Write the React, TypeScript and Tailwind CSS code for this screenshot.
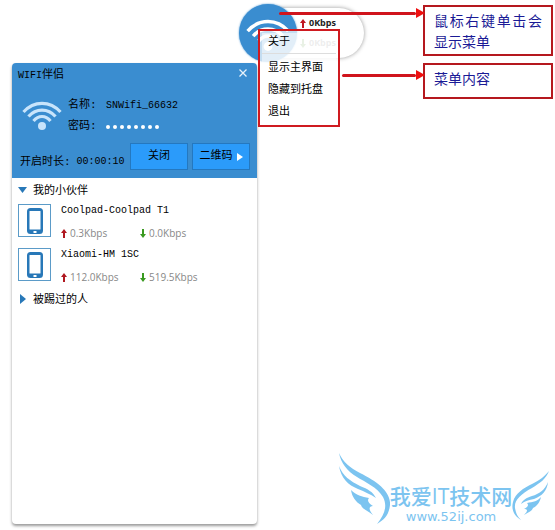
import { useState } from "react";

interface DeviceProps {
  id: number;
  name: string;
  up: string;
  down: string;
}

const devices: DeviceProps[] = [
  { id: 1, name: "Coolpad-Coolpad T1", up: "0.3Kbps", down: "0.0Kbps" },
  { id: 2, name: "Xiaomi-HM 1SC", up: "112.0Kbps", down: "519.5Kbps" },
];

const menuItems = ["显示主界面", "隐藏到托盘", "退出"];

function WifiIcon({ className }: { className: string }) {
  return (
    <svg viewBox="0 0 40 30" className={className} fill="none" aria-hidden="true">
      <g stroke="currentColor" strokeWidth="3.2">
        <path d="M1.5 11C12-.5 28-.5 38.5 11" />
        <path d="M6.5 15.5C14 7 26 7 33.5 15.5" />
        <path d="M11.5 20C16.5 14 23.5 14 28.5 20" />
      </g>
      <circle cx="20" cy="25" r="4" fill="currentColor" />
    </svg>
  );
}

function Arrow({ down, className }: { down?: boolean; className: string }) {
  return (
    <svg viewBox="0 0 6 9" className={`h-[9px] w-1.5 shrink-0 ${className}`} aria-hidden="true">
      <path
        d={down ? "M2 0h2v5h2L3 9 0 5h2z" : "M2 9h2V4h2L3 0 0 4h2z"}
        fill="currentColor"
      />
    </svg>
  );
}

function Pointer({ className }: { className: string }) {
  return (
    <div className={`absolute right-full flex items-center ${className}`}>
      <span className="h-[3px] flex-1 rounded-full bg-[#d0141c]" />
      <svg viewBox="0 0 9 10" className="h-2.5 w-[9px]" aria-hidden="true">
        <path d="M0 0l9 5-9 5z" fill="#ee1010" />
      </svg>
    </div>
  );
}

function FloatingWidget() {
  return (
    <div className="relative flex w-[125px] items-center self-end">
      <div className="z-10 flex size-[58px] shrink-0 items-start justify-center rounded-full bg-[#3a8dd0] pt-[15px] shadow-[0_0_2px_#3a8dd0]">
        <WifiIcon className="h-[33px] w-11 text-white" />
      </div>
      <div className="-ml-12 flex h-[50px] flex-1 flex-col justify-center gap-2 rounded-full bg-white pl-[51px] text-[9px] leading-3 font-bold shadow-[0_0_4px_#999]">
        <span className="flex items-center gap-[3px] text-[#222]">
          <Arrow className="text-[#c01820]" />
          0Kbps
        </span>
        <span className="flex items-center gap-[3px] text-[#888]">
          <Arrow down className="text-[#6aa050]" />
          0Kbps
        </span>
      </div>
      <div className="absolute top-[25px] left-[19px] z-20 flex w-[82px] flex-col border-2 border-[#cf1a20] bg-white/70 p-0.5 text-[11px] text-black">
        <div className="flex flex-col bg-white/50 pb-px">
          <button type="button" className="border-b border-[#ddd] pb-1 pl-1.5 text-left leading-4">
            关于
          </button>
          <div className="flex flex-col pt-0.5">
            {menuItems.map((item) => (
              <button key={item} type="button" className="pl-1.5 text-left leading-[22px]">
                {item}
              </button>
            ))}
          </div>
        </div>
      </div>
    </div>
  );
}

function Device({ name, up, down }: DeviceProps) {
  return (
    <li className="flex h-11 items-start gap-2.5">
      <span className="flex size-[33px] items-center justify-center border border-[#5b9bc8]">
        <svg viewBox="0 0 16 26" className="h-[26px] w-4" aria-hidden="true">
          <rect width="16" height="26" rx="3.5" fill="#2878b8" />
          <rect x="2.5" y="3" width="11" height="18.5" rx="0.5" fill="#fff" />
          <rect x="6.5" y="23" width="3" height="2" fill="#fff" />
        </svg>
      </span>
      <div className="flex flex-1 flex-col gap-2 pt-px">
        <span className="font-['Liberation_Mono','Noto_Sans_CJK_SC',monospace] text-[10px] leading-3 text-black">
          {name}
        </span>
        <div className="grid grid-cols-[79px_1fr] text-[10px] leading-4 text-[#888]">
          <span className="flex items-center gap-[3px]">
            <Arrow className="text-[#b01820]" />
            {up}
          </span>
          <span className="flex items-center gap-[3px]">
            <Arrow down className="text-[#3a9a20]" />
            {down}
          </span>
        </div>
      </div>
    </li>
  );
}

function WifiWindow() {
  const [open, setOpen] = useState(true);
  return (
    <section className="mt-px mb-1.5 flex w-[245px] flex-1 flex-col rounded-sm bg-white shadow-[0_2px_3px_#999]">
      <header className="flex flex-col rounded-t-sm bg-[#3a8dd0] pb-2 font-['Liberation_Mono','Noto_Sans_CJK_SC',monospace] text-[10px] text-black">
        <div className="flex h-[22px] items-center justify-between pr-2.5 pl-1.5">
          <h1 className="pt-0.5">
            WIFI<span className="text-[11px]">伴侣</span>
          </h1>
          <button type="button" aria-label="关闭窗口" className="pb-0.5">
            <svg viewBox="0 0 8 8" className="size-2" aria-hidden="true">
              <path d="M.5.5l7 7M7.5.5l-7 7" stroke="#e8f2fa" strokeWidth="1.3" />
            </svg>
          </button>
        </div>
        <div className="flex gap-1.5 pt-2.5 pl-2.5">
          <WifiIcon className="mt-1.5 h-[30px] w-10 text-[#c8e4fb]" />
          <dl className="grid grid-cols-[38px_1fr] leading-[21px]">
            <dt className="text-[11px]">名称:</dt>
            <dd>SNWifi_66632</dd>
            <dt className="text-[11px]">密码:</dt>
            <dd className="flex items-center gap-[3px]">
              {Array.from({ length: 8 }, (_, i) => (
                <span key={i} className="size-1 rounded-full bg-white" />
              ))}
            </dd>
          </dl>
        </div>
        <div className="flex items-center gap-1 pt-1.5 pr-[7px] pl-2">
          <p className="flex flex-1 items-center gap-1.5 pt-2.5 leading-4">
            <span className="text-[11px]">开启时长:</span>
            <span>00:00:10</span>
          </p>
          <button
            type="button"
            className="h-[27px] w-[58px] border border-[#2478c0] bg-[#2b9bfa] text-[11px]"
          >
            关闭
          </button>
          <button
            type="button"
            className="flex h-[27px] w-[58px] items-center justify-center gap-1 border border-[#2478c0] bg-[#2b9bfa] text-[11px]"
          >
            二维码
            <svg viewBox="0 0 6 8" className="h-2 w-1.5" aria-hidden="true">
              <path d="M0 0l6 4-6 4z" fill="#fff" />
            </svg>
          </button>
        </div>
      </header>
      <div className="flex flex-col pt-[3px] pl-1.5">
        <button
          type="button"
          aria-expanded={open}
          onClick={() => setOpen(!open)}
          className="flex h-[18px] items-center gap-1.5 text-[11px] text-black"
        >
          <svg viewBox="0 0 9 6" className="h-1.5 w-[9px]" aria-hidden="true">
            <path d="M0 0h9L4.5 6z" fill="#2878b8" />
          </svg>
          我的小伙伴
        </button>
        {open && (
          <ul className="pt-[5px]">
            {devices.map((item) => (
              <Device key={item.id} {...item} />
            ))}
          </ul>
        )}
        <button
          type="button"
          aria-expanded={false}
          className="-mt-0.5 flex h-[18px] items-center gap-[7px] pl-0.5 text-[11px] text-black"
        >
          <svg viewBox="0 0 6 10" className="h-2.5 w-1.5" aria-hidden="true">
            <path d="M0 0l6 5-6 5z" fill="#2878b8" />
          </svg>
          被踢过的人
        </button>
      </div>
    </section>
  );
}

function Watermark() {
  return (
    <a href="#" className="flex w-[212px] shrink-0 items-end text-[#7cc4f0]">
      <svg viewBox="0 0 52 72" className="-mr-1 h-[72px] w-[52px] shrink-0" fill="currentColor" aria-hidden="true">
        <path d="M1 1C5 10 12 16 22 21C40 30 53 40 52 53C51 63 46 68 39 72C46 63 50 55 45 45C39 35 27 30 19 25C9 19 3 11 1 1Z" />
        <path d="M1 14C5 24 12 29 22 34C30 37 35 40 38 46C32 42 27 40 20 37C10 33 3 26 1 14Z" />
        <path d="M13 38C18 43 24 45 31 46C29 48 30 51 35 54C31 54 30 57 35 63C29 58 24 57 23 53C18 50 14 45 13 38Z" />
      </svg>
      <span className="flex flex-1 flex-col items-center whitespace-nowrap">
        <span className="text-[21px] leading-[28px] font-medium">我爱IT技术网</span>
        <span className="font-['DejaVu_Sans',sans-serif] text-[13px] leading-[14px]">www.52ij.com</span>
      </span>
      <svg viewBox="0 0 38 50" className="mb-1 -ml-1 h-[50px] w-[38px] shrink-0" fill="currentColor" aria-hidden="true">
        <path d="M37 1C34 9 28 13 20 18C9 24 2 30 3 38C4 44 6 47 9 50C2 46-1 39 1 32C3 23 12 18 20 14C28 10 33 6 37 1Z" />
        <path d="M36 12C33 20 27 24 20 26C14 28 11 30 9 34C13 31 17 30 22 29C30 26 35 21 36 12Z" />
        <path d="M29 27C26 31 21 32 15 33C17 35 16 37 12 39C16 39 16 41 12 45C17 42 20 41 21 38C25 36 28 32 29 27Z" />
      </svg>
    </a>
  );
}

export default function App() {
  return (
    <main className="flex min-h-screen bg-white font-['Open_Sans','Noto_Sans_CJK_SC',sans-serif]">
      <div className="flex w-[364px] shrink-0 flex-col pt-1 pl-3">
        <FloatingWidget />
        <WifiWindow />
      </div>
      <aside className="relative z-30 flex min-w-0 flex-1 flex-col items-end justify-between pt-[5px] pb-1.5">
        <div className="flex w-full flex-col gap-[7px] pr-0.5 pl-[59px] text-[14px] leading-[21px] text-[#1a1a96]">
          <p className="relative border-2 border-[#b5181e] px-[9px] pt-[3px] pb-0.5 text-justify">
            鼠标右键单击会显示菜单
            <Pointer className="top-px w-[146px]" />
          </p>
          <p className="relative border-2 border-[#b5181e] px-[9px] pt-[3px] pb-2">
            菜单内容
            <Pointer className="top-[5px] w-[83px]" />
          </p>
        </div>
        <div className="flex w-full justify-end pr-[5px]">
          <Watermark />
        </div>
      </aside>
    </main>
  );
}
